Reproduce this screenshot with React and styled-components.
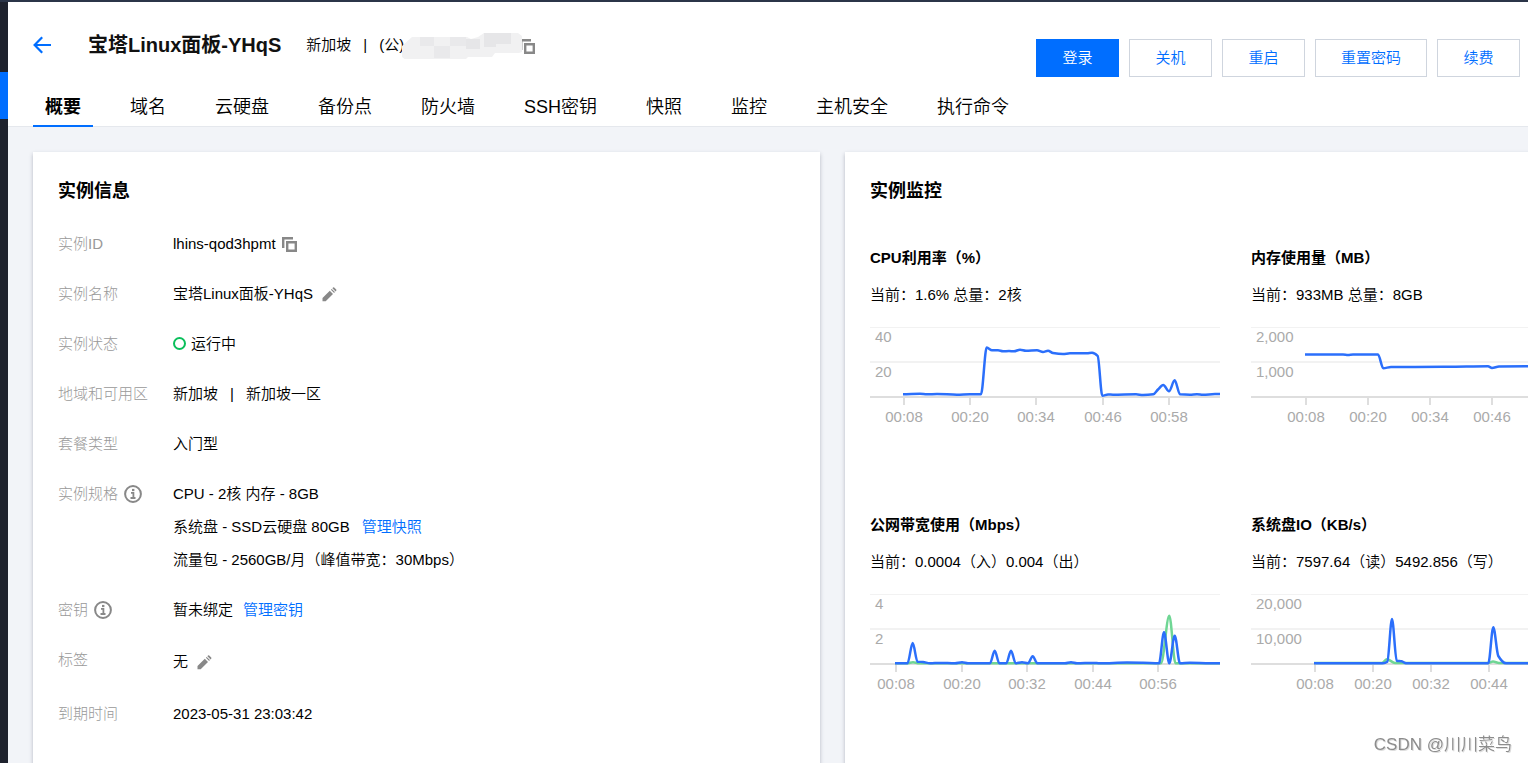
import { useId, useState } from 'react';
import styled, { createGlobalStyle, ThemeProvider } from 'styled-components';

const theme = {
  blue: '#006eff',
  text: '#000',
  muted: '#999',
  icon: '#888',
  green: '#0abf5b',
  line: '#2b6ffb',
  lineAlt: '#6fd694',
  page: '#f2f4f8',
  rail: '#1e222d',
};

const GlobalStyle = createGlobalStyle`
  * {
    box-sizing: border-box;
  }
  body {
    margin: 0;
    font-family: 'Liberation Sans', 'Noto Sans CJK SC', sans-serif;
    font-size: 15px;
    font-weight: 350;
    line-height: 20px;
    color: ${theme.text};
  }
  h1, h2, h3, p, dl, dd {
    margin: 0;
  }
`;

const Shell = styled.div`
  display: flex;
  height: 100vh;
  overflow: hidden;
  border-top: 2px solid #2b3548;
  background: ${({ theme }) => theme.page};
`;

const Rail = styled.aside`
  flex: 0 0 8px;
  padding-top: 70px;
  background: ${({ theme }) => theme.rail};
`;

const RailMarker = styled.div`
  height: 47px;
  background: ${({ theme }) => theme.blue};
`;

const Main = styled.main`
  flex: 1;
  min-width: 0;
  display: flex;
  flex-direction: column;
`;

const Header = styled.header`
  flex: none;
  padding: 0 8px 0 25px;
  background: white;
  border-bottom: 1px solid #e5e8ed;
`;

const TitleRow = styled.div`
  display: flex;
  justify-content: space-between;
  align-items: flex-start;
`;

const TitleGroup = styled.div`
  display: flex;
  align-items: center;
  height: 24px;
  margin-top: 31px;
`;

const Title = styled.h1`
  margin: 0 25px 0 37px;
  font-size: 20px;
  line-height: 24px;
  font-weight: 700;
  color: #111;
`;

const IconButton = styled.button`
  display: inline-flex;
  margin-top: ${({ $primary }) => $primary ? 0 : 2}px;
  padding: 0;
  border: 0;
  background: none;
  color: ${({ theme, $primary }) => $primary ? theme.blue : theme.icon};
  cursor: pointer;
`;

const Divider = styled.span`
  margin: 0 12px;
`;

const Address = styled.span`
  display: flex;
  align-items: center;
`;

const HiddenAddress = styled.svg`
  width: 122px;
  height: 28px;
  margin: 0 -4px 0 -2px;
  z-index: 1;
`;

const Actions = styled.div`
  display: flex;
  gap: 10px;
  margin-top: 37px;
`;

const Button = styled.button`
  min-width: 83px;
  height: 38px;
  padding: 0 25px;
  border: 1px solid ${({ theme, $primary }) => $primary ? theme.blue : '#cfd5de'};
  background: ${({ theme, $primary }) => $primary ? theme.blue : 'white'};
  color: ${({ theme, $primary }) => $primary ? 'white' : theme.blue};
  font: inherit;
  cursor: pointer;
`;

const Tabs = styled.nav`
  display: flex;
  gap: 25px;
  margin: 11px 0 -1px;
`;

const Tab = styled.a`
  padding: 2px 12px 0;
  border-bottom: 2px solid ${({ theme, $active }) => $active ? theme.blue : 'transparent'};
  font-size: 18px;
  line-height: 35px;
  font-weight: ${({ $active }) => $active ? 700 : 350};
  color: inherit;
  text-decoration: none;
  white-space: nowrap;
`;

const Content = styled.div`
  flex: 1;
  display: grid;
  grid-template-columns: repeat(2, minmax(787px, 1fr));
  gap: 25px;
  padding: 25px;
`;

const Card = styled.section`
  padding: 25px;
  background: white;
  box-shadow: 0 2px 4px rgba(54, 58, 80, 0.32);
`;

const CardTitle = styled.h2`
  font-size: 18px;
  line-height: 28px;
  font-weight: 700;
`;

const InfoList = styled.dl`
  margin-top: 22px;
`;

const InfoRow = styled.div`
  display: flex;
  align-items: flex-start;
  margin-bottom: 17px;
  line-height: 33px;
`;

const Term = styled.dt`
  flex: 0 0 115px;
  display: flex;
  align-items: center;
  gap: 6px;
  font-weight: 300;
  color: ${({ theme }) => theme.muted};
`;

const Value = styled.dd`
  line-height: ${({ $tall }) => $tall ? 37 : 33}px;
`;

const Line = styled.div`
  display: flex;
  align-items: center;
  gap: ${({ $gap }) => $gap || 0}px;
`;

const Link = styled.a`
  color: ${({ theme }) => theme.blue};
  text-decoration: none;
`;

const StatusDot = styled.span`
  width: 13px;
  height: 13px;
  border: 2px solid ${({ theme }) => theme.green};
  border-radius: 50%;
`;

const ChartGrid = styled.div`
  display: grid;
  grid-template-columns: repeat(2, 350px);
  gap: 85px 31px;
  margin-top: 43px;
`;

const ChartTitle = styled.h3`
  margin-bottom: 17px;
  font-size: 15px;
  line-height: 20px;
  font-weight: 700;
`;

const Plot = styled.svg`
  display: block;
  width: 350px;
  height: 125px;

  text {
    fill: #aaa;
    font-size: 15px;
  }
`;

const Watermark = styled.div`
  position: fixed;
  right: 16px;
  bottom: 8px;
  font-size: 17px;
  line-height: 20px;
  color: #8c8c8c;
  text-shadow: 1px 1px 0 #ddd;
`;

const BackIcon = () => (
  <svg width="18" height="18" viewBox="0 0 18 18" fill="none" stroke="currentColor" strokeWidth="2.2">
    <path d="M18 9H2M9.2 1.2L1.6 9l7.6 7.8" />
  </svg>
);

const CopyIcon = () => (
  <svg width="15" height="15" viewBox="0 0 15 15" fill="none" stroke="currentColor" strokeWidth="2.4">
    <path d="M1.200 11V1.200H11" />
    <path d="M5.200 5.200h8.600v8.600H5.200z" />
  </svg>
);

const EditIcon = () => (
  <svg width="15" height="15" viewBox="0 0 15 15" fill="currentColor">
    <path d="M0.500 11V14.200h3.200l7.300-7.300L7.800 3.700zM8.900 2.700l3.200 3.200 0.800-0.800L9.700 1.900zM10.400 1.200l3.200 3.200 0.600-0.600a0.900 0.900 0 0 0 0-1.200L12.200 0.600a0.900 0.900 0 0 0-1.200 0z" />
  </svg>
);

const InfoIcon = () => (
  <svg width="18" height="18" viewBox="0 0 18 18" fill="none" stroke={theme.icon} strokeWidth="2">
    <circle cx="9" cy="9" r="7.900" />
    <path d="M7 7.900h2.400v4.700M6.500 13h5" strokeWidth="1.800" />
    <path d="M8 5h2.400" strokeWidth="2.200" />
  </svg>
);

// Monotone cubic through the points, flat at every peak and dip
const smoothPath = points => {
  const slope = (a, b) => (b[1] - a[1]) / (b[0] - a[0]);
  const tangents = points.map((p, i) => {
    if (i === 0 || i === points.length - 1) return 0;
    const before = slope(points[i - 1], p);
    const after = slope(p, points[i + 1]);
    return before * after <= 0 ? 0 : (2 * before * after) / (before + after);
  });
  return points.slice(1).reduce((d, p, i) => {
    const prev = points[i];
    const step = (p[0] - prev[0]) / 3;
    return `${d}C${prev[0] + step},${prev[1] + tangents[i] * step} ${p[0] - step},${p[1] - tangents[i + 1] * step} ${p[0]},${p[1]}`;
  }, `M${points[0]}`);
};

const charts = [
  {
    title: 'CPU利用率（%）',
    summary: '当前：1.6% 总量：2核',
    levels: ['40', '20'],
    ticks: [[34, '00:08'], [100, '00:20'], [166, '00:34'], [233, '00:46'], [299, '00:58']],
    line: [
      [33, 89.3], [50, 88.7], [57, 89.3], [67, 89], [87, 89.7], [100, 89.3], [111, 89.3], [116.7, 42.5],
      [122, 45.3], [128, 45.3], [133, 46.3], [139, 46], [144, 46.3], [150, 44.7], [156, 45.7], [167, 45.3],
      [173, 47], [178, 45.7], [183, 48], [193, 49], [200, 48.3], [217, 48.3], [222, 47.7], [227.7, 51],
      [232.3, 90.7], [238, 89.5], [243, 89.7], [266, 89.3], [273, 90], [283.3, 89.3], [288, 84.5],
      [293.3, 80], [299, 86.3], [304.7, 75.3], [310, 89.3], [320, 89.7], [327, 89.3], [333, 89.8],
      [345, 89], [350, 89],
    ],
  },
  {
    title: '内存使用量（MB）',
    summary: '当前：933MB 总量：8GB',
    levels: ['2,000', '1,000'],
    ticks: [[55, '00:08'], [117, '00:20'], [179, '00:34'], [241, '00:46']],
    line: [
      [54, 49.5], [92, 49.5], [97, 49.9], [102, 49.5], [127, 49.5], [132.3, 63.3], [140, 62], [164, 62],
      [202, 61.7], [237, 61.3], [241, 63], [248, 61.5], [277, 61.2], [350, 61],
    ],
  },
  {
    title: '公网带宽使用（Mbps）',
    summary: '当前：0.0004（入）0.004（出）',
    levels: ['4', '2'],
    ticks: [[26, '00:08'], [92, '00:20'], [157, '00:32'], [223, '00:44'], [288, '00:56']],
    line: [
      [25, 91.3], [37.5, 91.3], [42.7, 71], [47.5, 89.7], [53, 90], [60, 91.3], [70, 90.9], [85, 91.3],
      [92, 90.3], [98, 91.3], [120, 91.3], [124.7, 78.7], [129.3, 91.3], [136.3, 91.3], [141, 78.7],
      [145.7, 91.3], [152, 90.3], [158, 91.3], [162.7, 84.3], [167.3, 91.3], [195, 91.3], [201, 90.3],
      [207, 91.3], [223, 90.9], [230, 91.3], [257, 90.6], [273, 90.8], [289, 91.3], [294, 60.3],
      [299.3, 91.3], [304.7, 63.7], [310, 91.3], [320, 90.8], [340, 91.3], [350, 91.3],
    ],
    lineAlt: [[25, 91.3], [37, 91.3], [43, 90.3], [49, 91.3], [291, 91.3], [299.3, 43.7], [305.5, 91.3], [350, 91.3]],
  },
  {
    title: '系统盘IO（KB/s）',
    summary: '当前：7597.64（读）5492.856（写）',
    levels: ['20,000', '10,000'],
    ticks: [[64, '00:08'], [122, '00:20'], [180, '00:32'], [238, '00:44']],
    line: [
      [63, 91.3], [132, 91.3], [136.3, 89.7], [141, 47], [145.7, 88.7], [150.7, 89.3], [155, 91.3],
      [237.3, 91.3], [242.3, 55.3], [247.3, 84], [255, 91.3], [350, 91.3],
    ],
    lineAlt: [[63, 91], [131, 91], [136, 87.3], [144, 91], [237, 91], [242, 89.6], [248, 91], [350, 91]],
  },
];

const Chart = ({ title, summary, levels, ticks, line, lineAlt }) => {
  const id = useId();
  return (
    <article aria-labelledby={id}>
      <ChartTitle id={id}>{title}</ChartTitle>
      <p>{summary}</p>
      <Plot viewBox="0 0 350 125">
        <path d="M0 22.5H350" stroke="#f2f2f2" />
        <path d="M0 57H350" stroke="#f2f2f2" strokeWidth="2" />
        <path d="M0 92H350" stroke="#dedede" strokeWidth="2" />
        {levels.map((level, i) => (
          <text key={level} x="5" y={37 + i * 35}>{level}</text>
        ))}
        {ticks.map(([x, label]) => (
          <g key={label}>
            <path d={`M${x} 92v8`} stroke="#dedede" strokeWidth="2" />
            <text x={x} y="117" textAnchor="middle">{label}</text>
          </g>
        ))}
        {lineAlt && <path d={smoothPath(lineAlt)} fill="none" stroke={theme.lineAlt} strokeWidth="2.5" />}
        <path d={smoothPath(line)} fill="none" stroke={theme.line} strokeWidth="2.5" />
      </Plot>
    </article>
  );
};

const Row = ({ label, info, tall, children }) => (
  <InfoRow>
    <Term>{label}{info && <InfoIcon />}</Term>
    <Value $tall={tall}>{children}</Value>
  </InfoRow>
);

const tabs = ['概要', '域名', '云硬盘', '备份点', '防火墙', 'SSH密钥', '快照', '监控', '主机安全', '执行命令'];
const actions = ['登录', '关机', '重启', '重置密码', '续费'];

const App = () => {
  const [activeTab, setActiveTab] = useState('概要');

  return (
    <ThemeProvider theme={theme}>
      <GlobalStyle />
      <Shell>
        <Rail><RailMarker /></Rail>
        <Main>
          <Header>
            <TitleRow>
              <TitleGroup>
                <IconButton $primary aria-label="返回"><BackIcon /></IconButton>
                <Title>宝塔Linux面板-YHqS</Title>
                <span>新加坡</span>
                <Divider>|</Divider>
                <Address>
                  (公)
                  <HiddenAddress viewBox="0 0 122 28">
                    <path d="M10 6h55l4 2 7-2 6-4h34l4 3v16l-3 1H93l-3 4H66l-4 4H5l-5-4V15z" fill="#f1f1f2" />
                    <path d="M18 6h14v9H18zM32 15h16v12H32zM48 6h16v9H48z" fill="#e9e9eb" />
                    <path d="M64 8h14v10H64zM82 2h12v14H82zM94 2h15v11H94z" fill="#e6e6e8" />
                  </HiddenAddress>
                  <IconButton aria-label="复制"><CopyIcon /></IconButton>
                </Address>
              </TitleGroup>
              <Actions>
                {actions.map((action, i) => (
                  <Button key={action} $primary={i === 0}>{action}</Button>
                ))}
              </Actions>
            </TitleRow>
            <Tabs>
              {tabs.map(tab => (
                <Tab key={tab} href="#" $active={tab === activeTab} onClick={() => setActiveTab(tab)}>{tab}</Tab>
              ))}
            </Tabs>
          </Header>
          <Content>
            <Card>
              <CardTitle>实例信息</CardTitle>
              <InfoList>
                <Row label="实例ID">
                  <Line $gap={6}>lhins-qod3hpmt <IconButton aria-label="复制"><CopyIcon /></IconButton></Line>
                </Row>
                <Row label="实例名称">
                  <Line $gap={9}>宝塔Linux面板-YHqS <IconButton aria-label="编辑"><EditIcon /></IconButton></Line>
                </Row>
                <Row label="实例状态">
                  <Line $gap={5}><StatusDot />运行中</Line>
                </Row>
                <Row label="地域和可用区">
                  <Line>新加坡<Divider>|</Divider>新加坡一区</Line>
                </Row>
                <Row label="套餐类型">入门型</Row>
                <Row label="实例规格" info>
                  <Line>CPU - 2核 内存 - 8GB</Line>
                  <Line $gap={12}>系统盘 - SSD云硬盘 80GB <Link href="#">管理快照</Link></Line>
                  <Line>流量包 - 2560GB/月（峰值带宽：30Mbps）</Line>
                </Row>
                <Row label="密钥" info>
                  <Line $gap={10}>暂未绑定 <Link href="#">管理密钥</Link></Line>
                </Row>
                <Row label="标签" tall>
                  <Line $gap={9}>无 <IconButton aria-label="编辑"><EditIcon /></IconButton></Line>
                </Row>
                <Row label="到期时间">2023-05-31 23:03:42</Row>
              </InfoList>
            </Card>
            <Card>
              <CardTitle>实例监控</CardTitle>
              <ChartGrid>
                {charts.map(chart => <Chart key={chart.title} {...chart} />)}
              </ChartGrid>
            </Card>
          </Content>
        </Main>
      </Shell>
      <Watermark>CSDN @川川菜鸟</Watermark>
    </ThemeProvider>
  );
};

export default App;
